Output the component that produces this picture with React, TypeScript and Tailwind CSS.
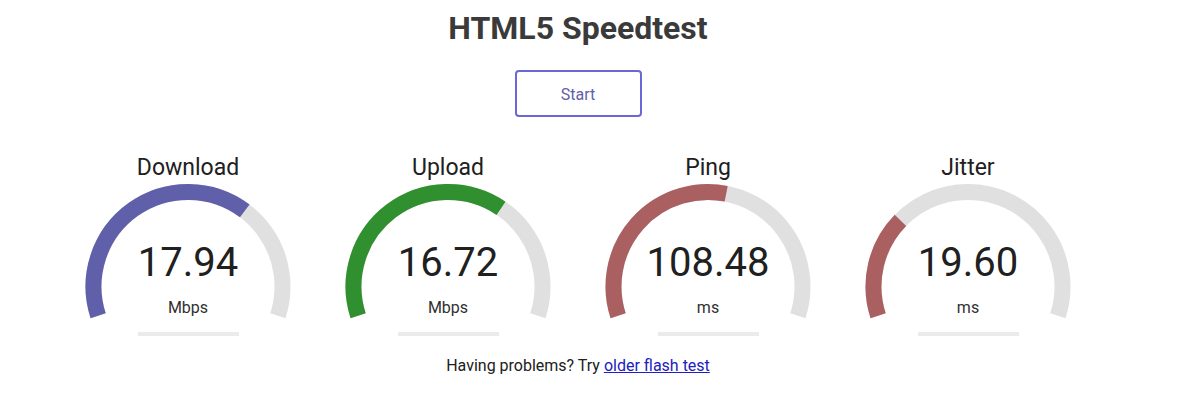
import React from "react";

const BK = "#E0E0E0";

const arcPath = (cx: number, cy: number, r: number, a0: number, a1: number) => {
  const x0 = cx + r * Math.cos(a0);
  const y0 = cy + r * Math.sin(a0);
  const x1 = cx + r * Math.cos(a1);
  const y1 = cy + r * Math.sin(a1);
  const large = a1 - a0 > Math.PI ? 1 : 0;
  return `M ${x0} ${y0} A ${r} ${r} 0 ${large} 1 ${x1} ${y1}`;
};

const mbpsToAmount = (s: number) => 1 - 1 / Math.pow(1.3, Math.sqrt(s));
const msToAmount = (d: number) => 1 - 1 / Math.pow(1.08, Math.sqrt(d));

type GaugeProps = { name: string; value: string; unit: string; amount: number; color: string };

const Gauge = ({ name, value, unit, amount, color }: GaugeProps) => {
  const start = -Math.PI * 1.1;
  const end = Math.PI * 0.1;
  const fillEnd = start + amount * Math.PI * 1.2;
  return (
    <div className="w-[260px] flex flex-col items-center">
      <div className="h-[26px] pt-[3px] text-[23px] leading-[26px] text-[#202020]">{name}</div>
      <div className="relative w-[260px] flex flex-col items-center pt-[61px]">
        <svg className="absolute left-0 top-0" width="260" height="150" viewBox="0 0 260 150">
          <path d={arcPath(130, 108.5, 94.5, start, end)} fill="none" stroke={BK} strokeWidth="16" />
          <path d={arcPath(130, 108.5, 94.5, start, fillEnd)} fill="none" stroke={color} strokeWidth="16" />
        </svg>
        <div className="relative text-[40px] leading-[48px] text-[#202020]">{value}</div>
        <div className="relative mt-[9px] text-[16px] leading-[24px] text-[#303030]">{unit}</div>
        <div className="mt-[12px] h-[4px] w-[101px] bg-[#EBEBEB]" />
      </div>
    </div>
  );
};

export default function App() {
  return (
    <div className="w-full h-[404px] bg-white pr-[29px] flex flex-col items-center font-['Roboto',sans-serif]">
      <h1 className="mt-[8px] text-[32px] leading-[40px] font-bold text-[#3a3a3a]">HTML5 Speedtest</h1>
      <button className="mt-[22px] w-[127px] h-[47px] pt-[2px] rounded-[4px] border-2 border-[#6a68d4] text-[16px] text-[#6060AA] bg-white">
        Start
      </button>
      <div className="mt-[35px] flex justify-center">
        <Gauge name="Download" value="17.94" unit="Mbps" amount={mbpsToAmount(17.94)} color="#6060AA" />
        <Gauge name="Upload" value="16.72" unit="Mbps" amount={mbpsToAmount(16.72)} color="#309030" />
        <Gauge name="Ping" value="108.48" unit="ms" amount={msToAmount(108.48)} color="#AA6060" />
        <Gauge name="Jitter" value="19.60" unit="ms" amount={msToAmount(19.6)} color="#AA6060" />
      </div>
      <div className="mt-[18px] text-[16px] leading-[24px] text-[#202020]">
        Having problems? Try{" "}
        <a href="#" className="text-[#2020c0] underline">
          older flash test
        </a>
      </div>
    </div>
  );
}
